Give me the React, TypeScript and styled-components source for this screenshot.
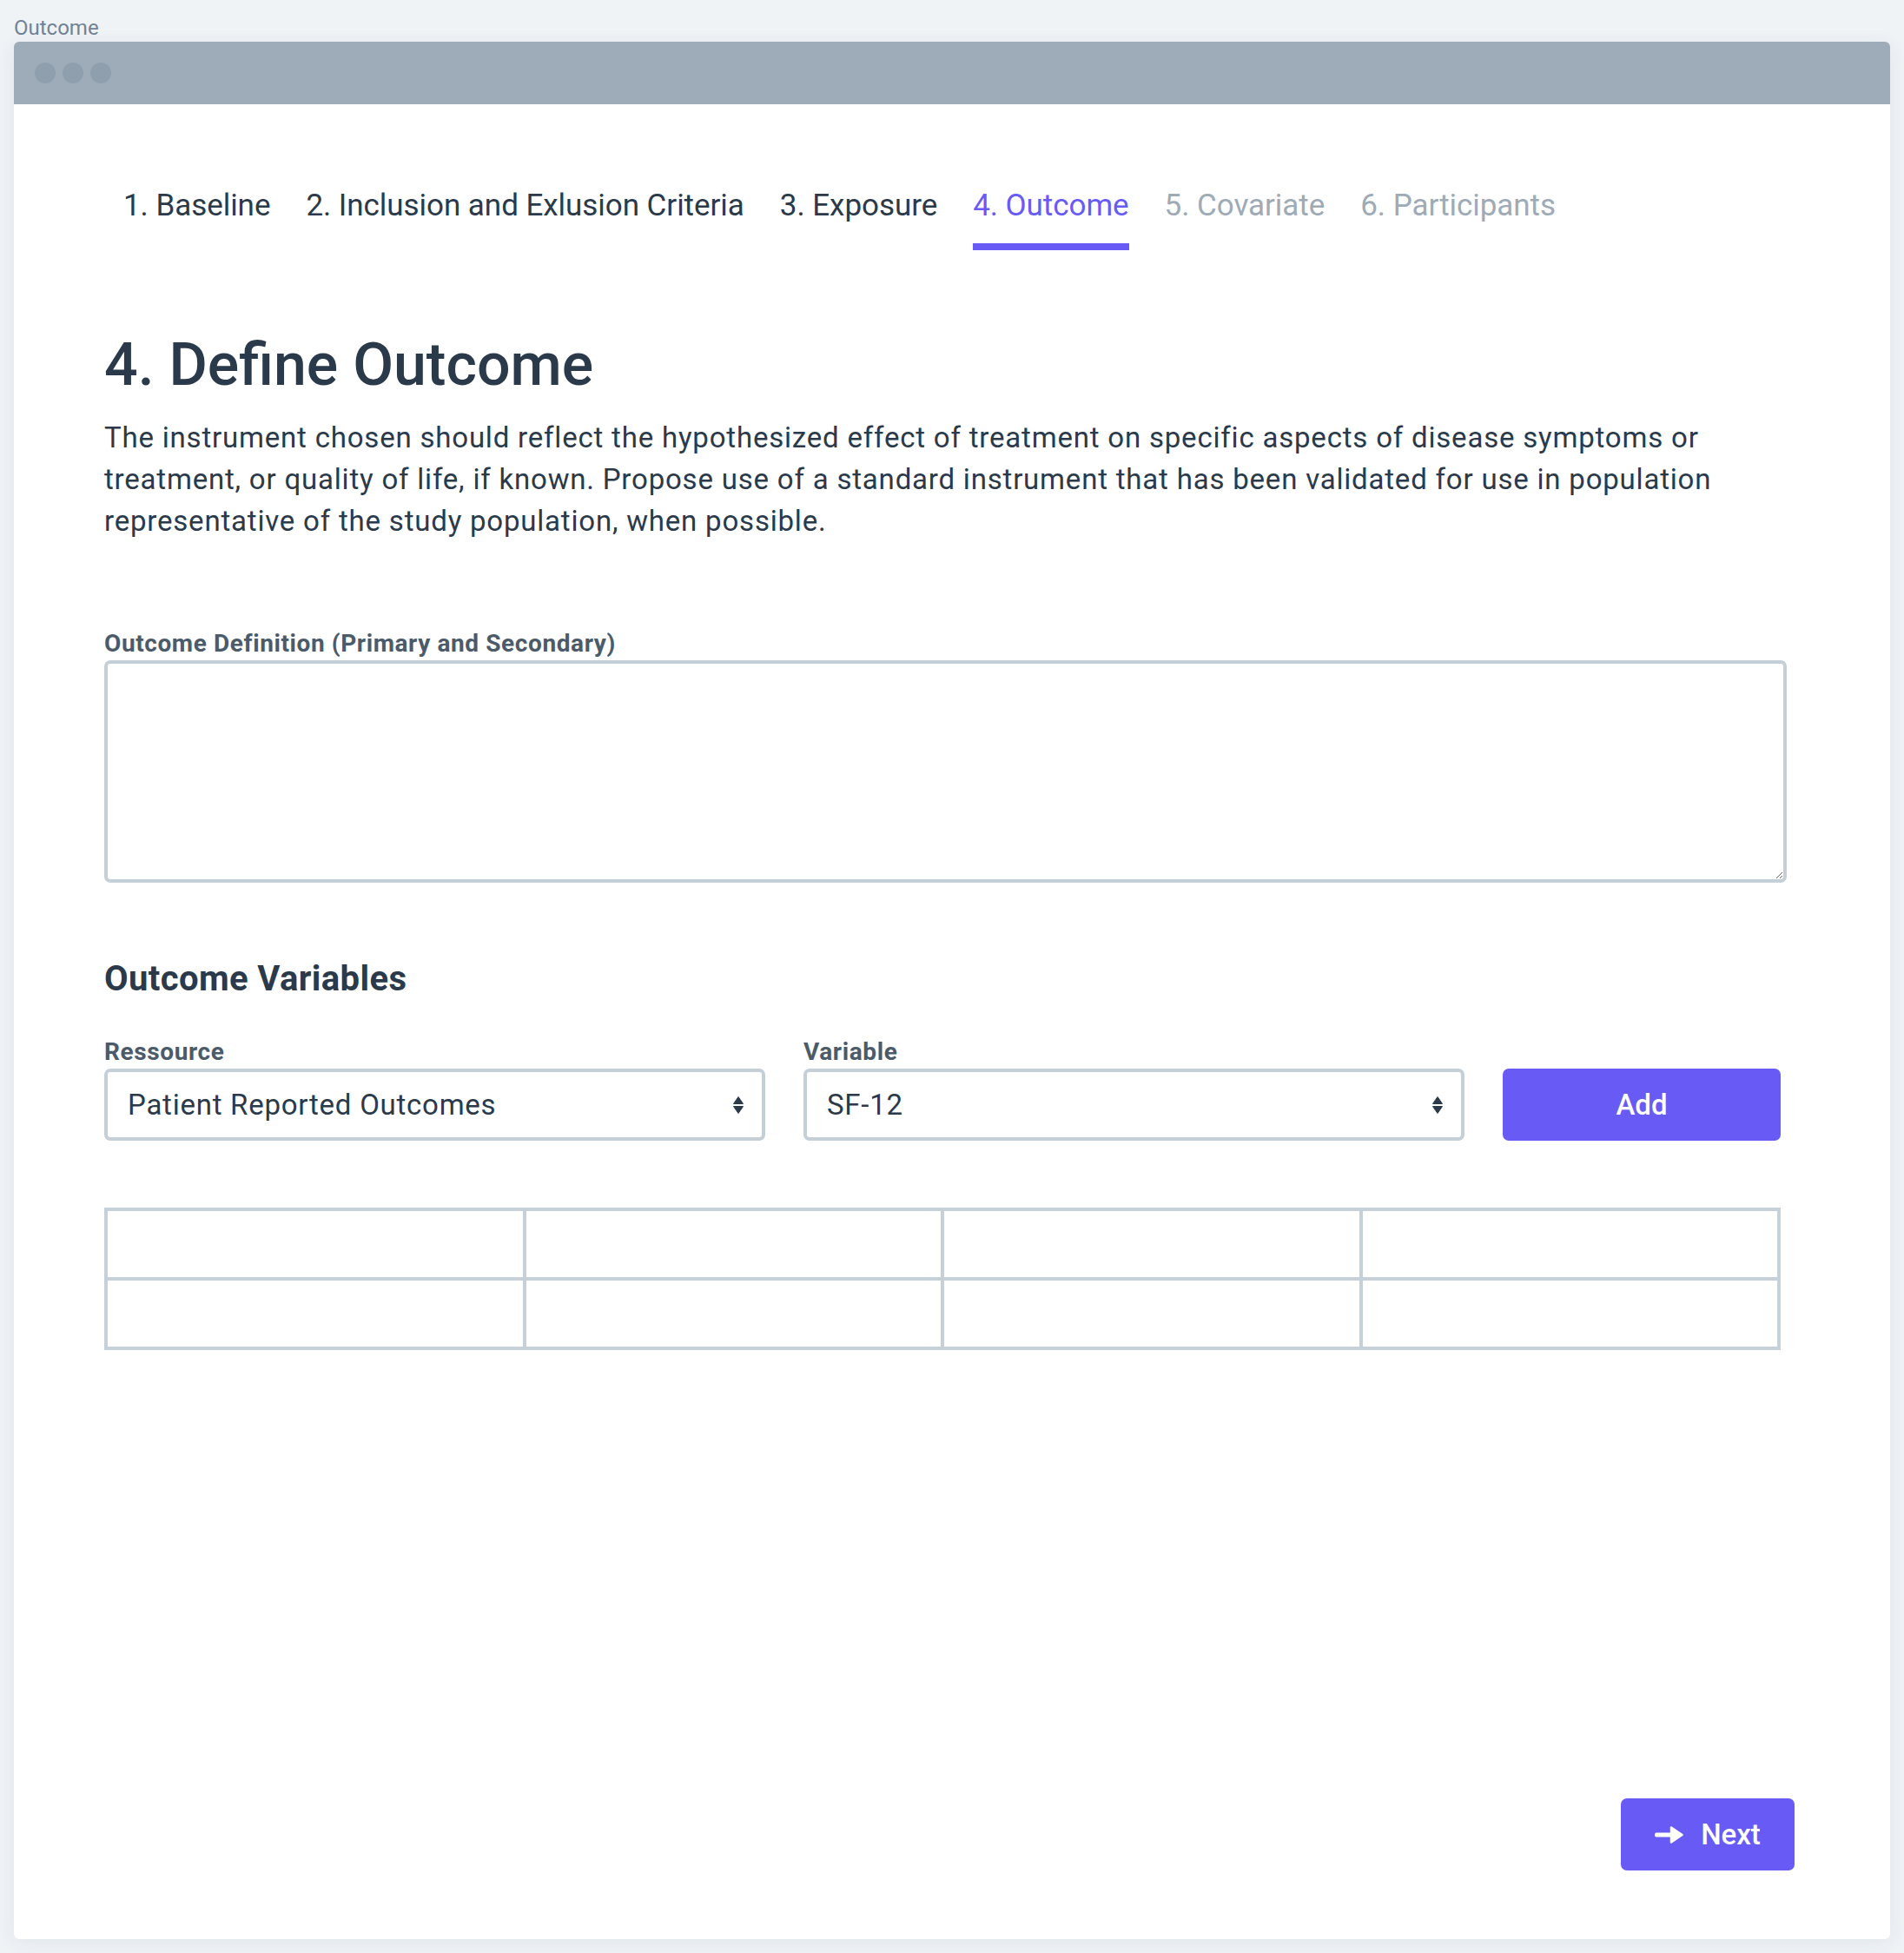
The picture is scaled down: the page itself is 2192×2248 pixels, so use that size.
import React from "react";
import styled, { createGlobalStyle } from "styled-components";

const GlobalStyle = createGlobalStyle`
  html, body {
    margin: 0;
    padding: 0;
    background: #eff3f6;
    font-family: Roboto, "Liberation Sans", Arial, sans-serif;
    -webkit-font-smoothing: antialiased;
  }
  * { box-sizing: border-box; }
`;

const Page = styled.div`
  padding: 18px 16px 16px 16px;
`;

const PageLabel = styled.div`
  font-size: 24px;
  line-height: 28px;
  color: #718294;
  margin-bottom: 2px;
`;

const Window = styled.div`
  width: 2160px;
  height: 2184px;
  background: #ffffff;
  border-radius: 6px;
  box-shadow: 0 4px 22px rgba(40, 60, 80, 0.07);
  display: flex;
  flex-direction: column;
  overflow: hidden;
`;

const TitleBar = styled.div`
  height: 72px;
  background: #9dacb8;
  display: flex;
  align-items: center;
  gap: 8px;
  padding-left: 24px;
`;

const Dot = styled.span`
  width: 24px;
  height: 24px;
  border-radius: 50%;
  background: #8f9fad;
`;

const Content = styled.div`
  flex: 1;
  padding: 97px 119px 0 104px;
  display: flex;
  flex-direction: column;
`;

const Tabs = styled.nav`
  display: flex;
  gap: 41px;
  padding-left: 22px;
`;

const Tab = styled.a<{ $state: "done" | "active" | "todo" }>`
  font-size: 35px;
  line-height: 40px;
  letter-spacing: -0.05px;
  padding-bottom: 23px;
  border-bottom: 8px solid
    ${(p) => (p.$state === "active" ? "#685bf5" : "transparent")};
  color: ${(p) =>
    p.$state === "active" ? "#685bf5" : p.$state === "done" ? "#2b3a4a" : "#9eabb7"};
  text-decoration: none;
  cursor: pointer;
`;

const Heading = styled.h1`
  margin: 93px 0 0 0;
  font-size: 68px;
  line-height: 79px;
  font-weight: 500;
  color: #2b3a4a;
  letter-spacing: 0;
`;

const Intro = styled.p`
  margin: 20px 0 0 0;
  font-size: 33px;
  line-height: 48px;
  color: #2b3a4a;
  letter-spacing: 0.8px;
`;

const FieldLabel = styled.label`
  display: block;
  font-size: 28px;
  line-height: 32px;
  font-weight: 700;
  color: #4c5b6a;
  letter-spacing: 0.6px;
`;

const DefinitionBlock = styled.div`
  margin-top: 101px;
  display: flex;
  flex-direction: column;
  gap: 3px;
`;

const TextArea = styled.textarea`
  display: block;
  width: 100%;
  height: 256px;
  border: 4px solid #c5cfd8;
  border-radius: 7px;
  padding: 16px 24px;
  font-family: inherit;
  font-size: 33px;
  color: #2b3a4a;
  resize: vertical;
  outline: none;
`;

const SubHeading = styled.h2`
  margin: 88px 0 0 0;
  font-size: 40px;
  line-height: 46px;
  font-weight: 700;
  color: #2b3a4a;
  letter-spacing: 0.4px;
`;

const VariableRow = styled.div`
  margin-top: 45px;
  margin-right: 7px;
  display: grid;
  grid-template-columns: 1fr 1fr 320px;
  column-gap: 44px;
  align-items: end;
`;

const Field = styled.div`
  display: flex;
  flex-direction: column;
  gap: 3px;
`;

const SelectBox = styled.div`
  height: 83px;
  border: 4px solid #c5cfd8;
  border-radius: 7px;
  padding: 0 21px 0 23px;
  display: flex;
  align-items: center;
  justify-content: space-between;
  font-size: 33px;
  letter-spacing: 0.75px;
  color: #2b3a4a;
  background: #ffffff;
  cursor: pointer;
`;

const PrimaryButton = styled.button<{ $wide?: boolean }>`
  height: 83px;
  border: none;
  border-radius: 7px;
  background: #685bf5;
  color: #ffffff;
  font-family: inherit;
  font-size: 33px;
  font-weight: 500;
  display: flex;
  align-items: center;
  justify-content: center;
  gap: 20px;
  cursor: pointer;
  width: ${(p) => (p.$wide ? "100%" : "200px")};
  padding: 0;
`;

const Table = styled.table`
  margin-top: 77px;
  width: calc(100% - 7px);
  border-collapse: collapse;
  table-layout: fixed;
`;

const Cell = styled.td`
  border: 4px solid #c5d0d9;
  height: 80px;
  padding: 0;
`;

const Footer = styled.div`
  display: flex;
  justify-content: flex-end;
  padding: 0 110px 79px 0;
`;

const SortIcon = () => (
  <svg width="12" height="20" viewBox="0 0 12 20" aria-hidden="true">
    <path d="M6 0.5 L11.5 8.5 L0.5 8.5 Z" fill="#2b3a4a" strokeLinejoin="round" stroke="#2b3a4a" strokeWidth="1" />
    <path d="M0.5 11.5 L11.5 11.5 L6 19.5 Z" fill="#2b3a4a" strokeLinejoin="round" stroke="#2b3a4a" strokeWidth="1" />
  </svg>
);

const ArrowIcon = () => (
  <svg width="33" height="20" viewBox="0 0 33 20" aria-hidden="true">
    <rect x="0" y="7.5" width="22" height="5" rx="2" fill="#ffffff" />
    <path d="M19 1.5 L31.5 10 L19 18.5 Z" fill="#ffffff" stroke="#ffffff" strokeWidth="2.5" strokeLinejoin="round" />
  </svg>
);

const tabs: { label: string; state: "done" | "active" | "todo" }[] = [
  { label: "1. Baseline", state: "done" },
  { label: "2. Inclusion and Exlusion Criteria", state: "done" },
  { label: "3. Exposure", state: "done" },
  { label: "4. Outcome", state: "active" },
  { label: "5. Covariate", state: "todo" },
  { label: "6. Participants", state: "todo" },
];

export default function App() {
  return (
    <>
      <GlobalStyle />
      <Page>
        <PageLabel>Outcome</PageLabel>
        <Window>
          <TitleBar>
            <Dot />
            <Dot />
            <Dot />
          </TitleBar>
          <Content>
            <Tabs>
              {tabs.map((t) => (
                <Tab key={t.label} $state={t.state}>
                  {t.label}
                </Tab>
              ))}
            </Tabs>
            <Heading>4. Define Outcome</Heading>
            <Intro>
              The instrument chosen should reflect the hypothesized effect of treatment on specific
              aspects of disease symptoms or treatment, or quality of life, if known. Propose use of a
              standard instrument that has been validated for use in population representative of the
              study population, when possible.
            </Intro>
            <DefinitionBlock>
              <FieldLabel>Outcome Definition (Primary and Secondary)</FieldLabel>
              <TextArea />
            </DefinitionBlock>
            <SubHeading>Outcome Variables</SubHeading>
            <VariableRow>
              <Field>
                <FieldLabel>Ressource</FieldLabel>
                <SelectBox role="combobox">
                  <span>Patient Reported Outcomes</span>
                  <SortIcon />
                </SelectBox>
              </Field>
              <Field>
                <FieldLabel>Variable</FieldLabel>
                <SelectBox role="combobox">
                  <span>SF-12</span>
                  <SortIcon />
                </SelectBox>
              </Field>
              <PrimaryButton $wide>Add</PrimaryButton>
            </VariableRow>
            <Table>
              <tbody>
                {[0, 1].map((r) => (
                  <tr key={r}>
                    {[0, 1, 2, 3].map((c) => (
                      <Cell key={c} />
                    ))}
                  </tr>
                ))}
              </tbody>
            </Table>
          </Content>
          <Footer>
            <PrimaryButton>
              <ArrowIcon />
              <span>Next</span>
            </PrimaryButton>
          </Footer>
        </Window>
      </Page>
    </>
  );
}
